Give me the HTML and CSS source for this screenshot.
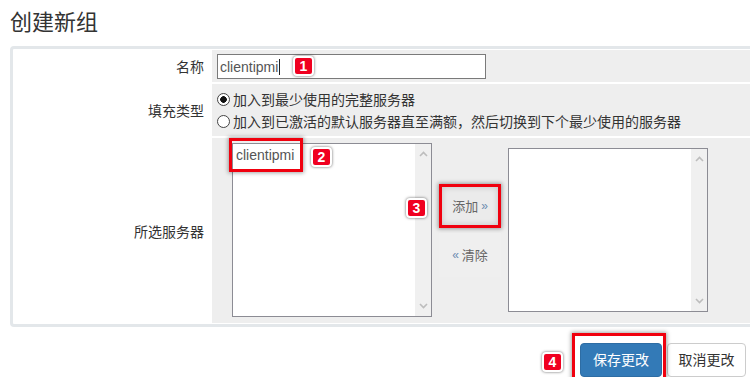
FILE: index.html
```html
<!DOCTYPE html>
<html lang="zh-CN">
<head>
    <meta charset="UTF-8">
    <meta name="viewport" content="width=device-width, initial-scale=1.0">
    <title>创建新组</title>
    <link rel="stylesheet" href="styles.css">
</head>
<body>
    <div class="page">
        <h3 class="title">创建新组</h3>

        <div class="panel">
            <table class="form">
                <tr>
                    <th>名称</th>
                    <td class="value name-cell">
                        <div class="name-field">
                            <input type="text" class="text-input" value="clientipmi">
                            <span class="caret"></span>
                            <span class="badge badge-1">1</span>
                        </div>
                    </td>
                </tr>
                <tr>
                    <th>填充类型</th>
                    <td class="value fill-cell">
                        <label class="choice">
                            <input type="radio" name="fill" checked>
                            <span>加入到最少使用的完整服务器</span>
                        </label>
                        <label class="choice">
                            <input type="radio" name="fill">
                            <span>加入到已激活的默认服务器直至满额，然后切换到下个最少使用的服务器</span>
                        </label>
                    </td>
                </tr>
                <tr>
                    <th>所选服务器</th>
                    <td class="value picker-cell">
                        <div class="picker">
                            <div class="list list-left">
                                <div class="list-items">
                                    <div class="option">clientipmi</div>
                                </div>
                                <div class="scroll">
                                    <svg width="9" height="6" viewBox="0 0 9 6"><polyline points="1,5 4.5,1.5 8,5"/></svg>
                                    <svg width="9" height="6" viewBox="0 0 9 6"><polyline points="1,1 4.5,4.5 8,1"/></svg>
                                </div>
                            </div>

                            <div class="mover">
                                <button class="move-btn marked">添加 <span class="arrow">»</span></button>
                                <button class="move-btn"><span class="arrow">«</span> 清除</button>
                            </div>

                            <div class="list list-right">
                                <div class="list-items"></div>
                                <div class="scroll">
                                    <svg width="9" height="6" viewBox="0 0 9 6"><polyline points="1,5 4.5,1.5 8,5"/></svg>
                                    <svg width="9" height="6" viewBox="0 0 9 6"><polyline points="1,1 4.5,4.5 8,1"/></svg>
                                </div>
                            </div>

                            <span class="mark mark-option"></span>
                            <span class="badge badge-2">2</span>
                            <span class="badge badge-3">3</span>
                        </div>
                    </td>
                </tr>
            </table>
        </div>

        <div class="actions">
            <div class="save-wrap">
                <span class="mark mark-save"></span>
                <span class="badge badge-4">4</span>
                <button class="btn btn-primary">保存更改</button>
            </div>
            <button class="btn btn-default">取消更改</button>
        </div>
    </div>
</body>
</html>
```

FILE: styles.css
```css
* {
    box-sizing: border-box;
}

body {
    margin: 0;
    overflow: hidden;
    background: #fff;
    color: #333;
    font-family: "Liberation Sans", "Noto Sans CJK SC", sans-serif;
    font-size: 14px;
}

.page {
    padding-left: 10px;
}

.title {
    margin: 0;
    height: 46px;
    font-size: 22px;
    font-weight: normal;
    line-height: 46px;
    color: #333;
}

.panel {
    width: 760px;
    border: 3px solid #e3e7ea;
    border-radius: 4px;
}

.form {
    width: 100%;
    margin: -1px 0;
    border-collapse: separate;
    border-spacing: 0 2px;
}

.form th {
    width: 199px;
    padding: 0 8px 0 0;
    font-weight: normal;
    text-align: right;
    vertical-align: middle;
}

.value {
    background: #eee;
    vertical-align: top;
}

.name-cell {
    padding: 4px 5px 3px;
}

.name-field {
    position: relative;
    width: 269px;
}

.text-input {
    display: block;
    width: 269px;
    height: 25px;
    padding: 0 2px;
    border: 1px solid #7a7a7a;
    color: #555;
    font-family: "Liberation Sans", sans-serif;
    font-size: 14px;
}

.caret {
    position: absolute;
    left: 62px;
    top: 5px;
    width: 1px;
    height: 16px;
    background: #222;
}

.fill-cell {
    padding: 4px 5px;
}

.choice {
    display: flex;
    align-items: center;
    gap: 3px;
    height: 22px;
}

.choice input {
    appearance: none;
    width: 13px;
    height: 13px;
    margin: 0;
    border: 1px solid #444;
    border-radius: 50%;
    background: #fff;
}

.choice input:checked {
    background: radial-gradient(circle, #111 0 3px, #fff 3.6px);
}

.picker-cell {
    padding: 5px 5px 6px 20px;
}

.picker {
    position: relative;
    display: flex;
    align-items: center;
}

.list {
    display: flex;
    width: 200px;
    border: 1px solid #8c8c94;
    background: #fff;
}

.list-left {
    height: 174px;
}

.list-right {
    height: 164px;
}

.list-items {
    flex: 1;
    padding: 1px 3px;
}

.option {
    line-height: 20px;
    color: #555;
}

.scroll {
    display: flex;
    flex-direction: column;
    justify-content: space-between;
    align-items: center;
    width: 16px;
    padding: 7px 0;
    background: #f0f0f0;
}

.scroll polyline {
    fill: none;
    stroke: #bdbdbd;
    stroke-width: 1.6;
}

.mover {
    display: flex;
    flex-direction: column;
    align-items: center;
    gap: 5px;
    width: 76px;
}

.move-btn {
    display: flex;
    align-items: center;
    justify-content: center;
    gap: 3px;
    width: 62px;
    height: 44px;
    padding: 0;
    border: 3px solid transparent;
    background: #efefef;
    color: #666;
    font-family: "Liberation Sans", "Noto Sans CJK SC", sans-serif;
    font-size: 13px;
}

.move-btn.marked {
    border-color: #f0000e;
    background: #ebebeb;
    box-shadow: 0 0 4px 1px rgba(0, 0, 0, 0.35), inset 0 0 6px rgba(0, 0, 0, 0.18);
}

.arrow {
    color: #6b8cb0;
    font-size: 12px;
}

.mark {
    position: absolute;
    border: 3px solid #f0000e;
    box-shadow: 0 0 4px 1px rgba(0, 0, 0, 0.35);
    pointer-events: none;
}

.mark-option {
    left: -3px;
    top: -5px;
    width: 74px;
    height: 34px;
}

.badge {
    position: absolute;
    z-index: 2;
    width: 21px;
    height: 20px;
    border: 2px solid #fff;
    border-radius: 4px;
    background: #f00020;
    box-shadow: 0 0 3px rgba(0, 0, 0, 0.6);
    color: #fff;
    font-family: "Liberation Sans", sans-serif;
    font-size: 14px;
    font-weight: bold;
    line-height: 16px;
    text-align: center;
}

.badge-1 {
    left: 76px;
    top: 2px;
}

.badge-2 {
    left: 79px;
    top: 4px;
}

.badge-3 {
    left: 174px;
    top: 55px;
}

.badge-4 {
    left: -38px;
    top: 9px;
}

.actions {
    display: flex;
    justify-content: flex-end;
    gap: 5px;
    margin-top: 16px;
    padding-right: 4px;
}

.save-wrap {
    position: relative;
}

.mark-save {
    left: -8px;
    top: -10px;
    width: 94px;
    height: 50px;
}

.btn {
    display: block;
    height: 34px;
    padding: 0 12px;
    border: 1px solid;
    border-radius: 4px;
    font-family: "Liberation Sans", "Noto Sans CJK SC", sans-serif;
    font-size: 14px;
    line-height: 32px;
}

.btn-primary {
    border-color: #2e6da4;
    background: #337ab7;
    color: #fff;
}

.btn-default {
    padding: 0 10.5px;
    border-color: #ccc;
    background: #fff;
    color: #333;
}
```
